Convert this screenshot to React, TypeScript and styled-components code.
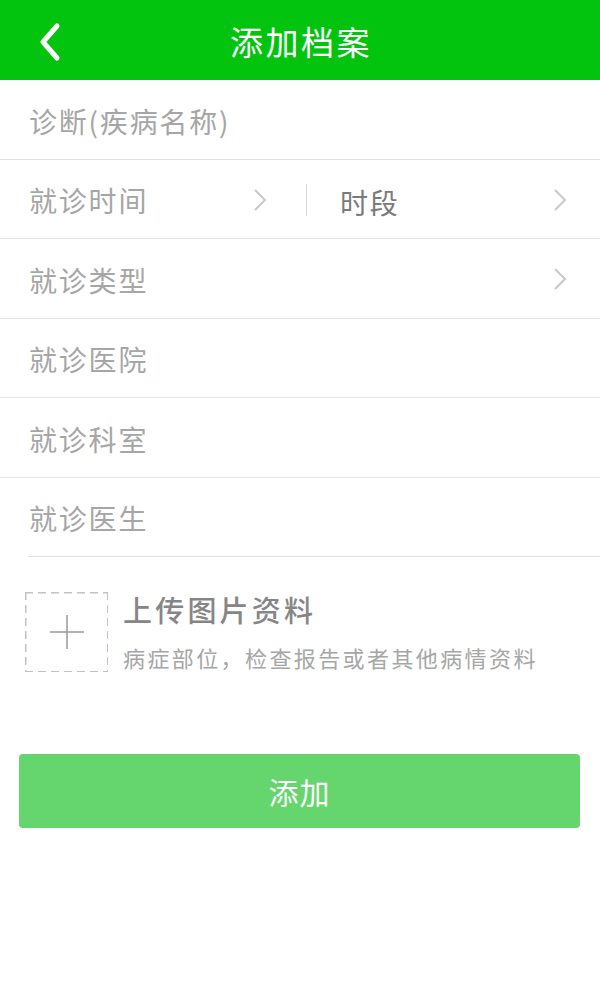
import React from "react";
import styled, { createGlobalStyle } from "styled-components";

const Global = createGlobalStyle`
  html, body { margin: 0; padding: 0; background: #fff; }
  body { font-family: "Noto Sans CJK SC", "Noto Sans", sans-serif; }
  * { box-sizing: border-box; }
`;

const Page = styled.div`
  width: 600px;
  min-height: 1000px;
  background: #fff;
  display: flex;
  flex-direction: column;
`;

const Header = styled.header`
  height: 80px;
  background: #02c40f;
  display: flex;
  align-items: center;
  justify-content: center;
  position: relative;
`;

const BackButton = styled.button`
  position: absolute;
  left: 30px;
  top: 20px;
  width: 40px;
  height: 44px;
  border: 0;
  padding: 0;
  background: transparent;
  display: flex;
  align-items: center;
  justify-content: center;
`;

const Title = styled.h1`
  margin: 0;
  color: #fff;
  font-size: 33px;
  font-weight: 400;
  letter-spacing: 2.5px;
  line-height: 1;
  padding-top: 2px;
  padding-left: 2px;
`;

const Row = styled.div<{ $inset?: boolean }>`
  height: 79.5px;
  display: flex;
  align-items: center;
  border-bottom: 1px solid #e2e2e2;
  margin-left: ${(p) => (p.$inset ? "28px" : "0")};
  padding-left: ${(p) => (p.$inset ? "1px" : "29px")};
`;

const Cell = styled.div<{ $width?: string; $pad?: string }>`
  display: flex;
  align-items: center;
  height: 100%;
  width: ${(p) => p.$width ?? "auto"};
  flex: ${(p) => (p.$width ? "none" : "1")};
  padding-left: ${(p) => p.$pad ?? "0"};
`;

const Label = styled.span<{ $dark?: boolean; $drop?: number }>`
  flex: 1;
  font-size: 28px;
  font-weight: 400;
  letter-spacing: 1.8px;
  color: ${(p) => (p.$dark ? "#7a7a7a" : "#a6a6a6")};
  line-height: 1;
  padding-top: ${(p) => p.$drop ?? 3}px;
`;

const VDivider = styled.div`
  width: 1px;
  height: 32px;
  background: #d6d6d6;
  margin-top: 2px;
`;

const Chevron = styled.svg<{ $right: number }>`
  width: 14px;
  height: 24px;
  margin-right: ${(p) => p.$right}px;
  margin-top: 2px;
  flex: none;
`;

const Arrow = ({ right }: { right: number }) => (
  <Chevron $right={right} viewBox="0 0 14 24" fill="none">
    <path d="M2 2 L12 12 L2 22" stroke="#c9c9c9" strokeWidth="2" strokeLinejoin="miter" />
  </Chevron>
);

const Upload = styled.div`
  display: flex;
  align-items: flex-start;
  gap: 15px;
  padding: 35px 0 0 25px;
`;

const dash = "#c2c2c2";

const UploadBox = styled.div`
  width: 83px;
  height: 80px;
  flex: none;
  display: flex;
  align-items: center;
  justify-content: center;
  background-image:
    repeating-linear-gradient(90deg, ${dash} 0 8px, transparent 8px 13px),
    repeating-linear-gradient(90deg, ${dash} 0 8px, transparent 8px 13px),
    repeating-linear-gradient(180deg, ${dash} 0 8px, transparent 8px 13px),
    repeating-linear-gradient(180deg, ${dash} 0 8px, transparent 8px 13px);
  background-size: 100% 1.5px, 100% 1.5px, 1.5px 100%, 1.5px 100%;
  background-position: 0 0, 0 100%, 0 0, 100% 0;
  background-repeat: no-repeat;
`;

const UploadText = styled.div`
  display: flex;
  flex-direction: column;
`;

const UploadTitle = styled.div`
  font-size: 29px;
  font-weight: 500;
  color: #868686;
  letter-spacing: 3.2px;
  line-height: 34px;
`;

const UploadHint = styled.div`
  font-size: 22px;
  font-weight: 400;
  color: #a6a6a6;
  letter-spacing: 2.4px;
  line-height: 30px;
  margin-top: 16px;
`;

const SubmitButton = styled.button`
  margin: 82px 20px 0 19px;
  height: 74px;
  border: 0;
  border-radius: 4px;
  background: #65d56e;
  color: #fff;
  font-family: "Noto Sans CJK SC", "Noto Sans", sans-serif;
  font-size: 30px;
  letter-spacing: 1px;
`;

export default function App() {
  return (
    <Page>
      <Global />
      <Header>
        <BackButton aria-label="返回">
          <svg width="26" height="40" viewBox="0 0 26 40" fill="none">
            <path d="M20 4 L6 20 L20 36" stroke="#fff" strokeWidth="5" strokeLinecap="round" strokeLinejoin="round" />
          </svg>
        </BackButton>
        <Title>添加档案</Title>
      </Header>

      <Row>
        <Label>诊断(疾病名称)</Label>
      </Row>
      <Row>
        <Cell $width="277px">
          <Label>就诊时间</Label>
          <Arrow right={39} />
        </Cell>
        <VDivider />
        <Cell $pad="33px">
          <Label $dark $drop={6}>时段</Label>
          <Arrow right={33} />
        </Cell>
      </Row>
      <Row>
        <Label>就诊类型</Label>
        <Arrow right={33} />
      </Row>
      <Row>
        <Label>就诊医院</Label>
      </Row>
      <Row>
        <Label>就诊科室</Label>
      </Row>
      <Row $inset>
        <Label>就诊医生</Label>
      </Row>

      <Upload>
        <UploadBox>
          <svg width="36" height="36" viewBox="0 0 36 36">
            <path d="M18 1 V35 M1 18 H35" stroke="#9a9a9a" strokeWidth="1.5" />
          </svg>
        </UploadBox>
        <UploadText>
          <UploadTitle>上传图片资料</UploadTitle>
          <UploadHint>病症部位，检查报告或者其他病情资料</UploadHint>
        </UploadText>
      </Upload>

      <SubmitButton>添加</SubmitButton>
    </Page>
  );
}
